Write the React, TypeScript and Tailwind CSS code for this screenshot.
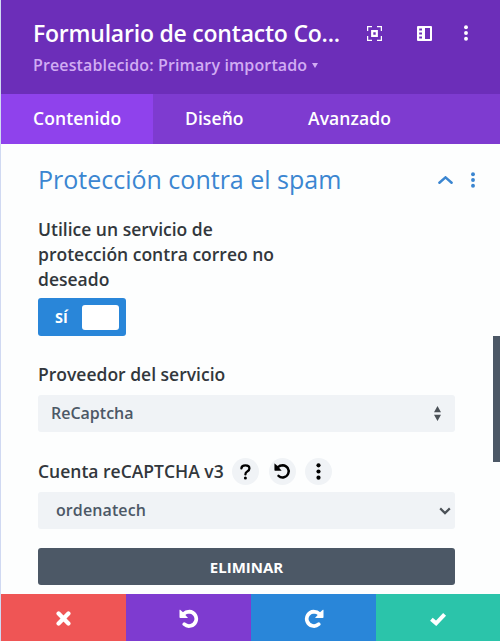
import React from "react";

function Dots({ className }: { className: string }) {
  return (
    <svg className={className} viewBox="0 0 4 16" fill="currentColor">
      <circle cx="2" cy="2.2" r="1.95" />
      <circle cx="2" cy="8" r="1.95" />
      <circle cx="2" cy="13.8" r="1.95" />
    </svg>
  );
}

function Undo({ className, weight }: { className: string; weight: number }) {
  return (
    <svg className={className} viewBox="0 0 20 20" fill="none">
      <path d="M.5 1Q.5.4 1.1.8L4 3.2 9 9H1.3Q.5 9 .5 8.2Z" fill="currentColor" />
      <path
        d="M4.5 5Q6.8 2.6 10.4 2.6A7.2 7.2 0 1 1 5.3 15.2"
        stroke="currentColor"
        strokeWidth={weight}
        strokeLinecap="round"
      />
    </svg>
  );
}

function RoundButton({ children }: { children: React.ReactNode }) {
  return (
    <button className="flex size-[27px] items-center justify-center rounded-full bg-[#f0f3f6] text-black">
      {children}
    </button>
  );
}

export default function App() {
  return (
    <div className="flex h-[641px] w-[500px] flex-col overflow-hidden border-l border-[#d0d9f2] bg-[#fdfefe] font-['Open_Sans','Noto_Sans',sans-serif] whitespace-nowrap text-[#32373c]">
      <header className="h-[94px] shrink-0 bg-[#6c2eb9] pt-4 pl-8 text-white">
        <div className="flex h-[34px] items-center">
          <h1 className="w-[334px] text-[23px] leading-[34px] font-semibold tracking-[-0.22px]">
            Formulario de contacto Co...
          </h1>
          <svg className="size-[15px]" viewBox="0 0 15 15" fill="none" stroke="currentColor">
            <path d="M.6 5V.6H5M10 .6h4.4V5M14.4 10v4.4H10M5 14.4H.6V10" strokeWidth="1.3" />
            <path d="M5.2 5.2h4.6v4.6H5.2z" strokeWidth="2.2" />
          </svg>
          <svg className="ml-[35px] size-[15px]" viewBox="0 0 15 15">
            <path
              d="M1 0h13q1 0 1 1v13q0 1-1 1H1q-1 0-1-1V1q0-1 1-1ZM8 2v11h5V2ZM2.2 2.6v2h2.8v-2ZM2.2 6.5v2h2.8v-2ZM2.2 10.4v2h2.8v-2Z"
              fill="currentColor"
              fillRule="evenodd"
            />
          </svg>
          <Dots className="ml-[32px] h-4 w-1" />
        </div>
        <div className="flex h-[30px] items-center text-[16px] font-semibold text-[#d1acf3]">
          <span className="tracking-[0.13px]">Preestablecido: Primary importado</span>
          <svg className="ml-[5px] h-[5px] w-[6px]" viewBox="0 0 6 5" fill="currentColor">
            <path d="M0 0h6L3 5Z" />
          </svg>
        </div>
      </header>

      <nav className="flex h-[50px] shrink-0 bg-[#7e3bd0] text-[17.5px] font-semibold text-white">
        <button className="w-[152px] bg-[#8f42ec] pb-0.5 pl-8 text-left tracking-[0.08px]">Contenido</button>
        <button className="w-[123px] pb-0.5 pl-8 text-left tracking-[0.08px]">Diseño</button>
        <button className="pb-0.5 pl-8 text-left tracking-[0.08px]">Avanzado</button>
      </nav>

      <div className="flex h-[450px] shrink-0">
        <main className="w-[454px] pt-[17px] pl-[37px]">
          <div className="flex h-[38px] w-[440px] items-center text-[#3b86d1]">
            <h2 className="w-[400px] text-[25px]">Protección contra el spam</h2>
            <svg className="h-[8px] w-[15px] shrink-0" viewBox="0 0 15 8" fill="none">
              <path d="M1.4 6.7 7.5 1.4l6.1 5.3" stroke="currentColor" strokeWidth="2.5" strokeLinecap="round" />
            </svg>
            <Dots className="ml-[18px] h-4 w-1 shrink-0" />
          </div>

          <p className="mt-[18px] text-[17.5px] leading-[25px] font-semibold">
            Utilice un servicio de
            <br />
            protección contra correo no
            <br />
            deseado
          </p>

          <button className="mt-[6px] flex h-[38px] w-[88px] items-center justify-between rounded-[3px] bg-[#2986d9] pr-[7px] pl-[17px]">
            <span className="pt-0.5 text-[14.5px] font-bold text-white">SÍ</span>
            <span className="h-[25px] w-[37px] rounded-[3px] bg-white" />
          </button>

          <p className="mt-[26px] text-[17.5px] leading-[25px] font-semibold">Proveedor del servicio</p>
          <div className="mt-2 flex h-[37px] w-[417px] items-center justify-between rounded-[3px] bg-[#f0f3f6] pr-[14px] pl-[13px] text-[#4c5866]">
            <span className="pb-0.5 text-[16px] font-semibold">ReCaptcha</span>
            <svg className="h-[15px] w-[7px]" viewBox="0 0 7 15" fill="#4b5157">
              <path d="M3.5 0 7 6.3H0ZM0 8.7h7L3.5 15Z" />
            </svg>
          </div>

          <div className="mt-[26px] flex h-[27px] items-center">
            <p className="w-[194px] text-[17.5px] font-semibold">Cuenta reCAPTCHA v3</p>
            <div className="flex gap-[9.5px]">
              <RoundButton>
                <svg className="h-[16px] w-[11px]" viewBox="0 0 11 16" fill="none">
                  <path
                    d="M1.4 4.4C1.5 2.5 3.1 1.4 5.4 1.4c2.4 0 4 1.2 4 3 0 1.5-.8 2.3-2.2 3.1C5.9 8.2 5.4 8.9 5.4 10.4"
                    stroke="currentColor"
                    strokeWidth="2.3"
                    strokeLinecap="round"
                  />
                  <circle cx="5.4" cy="14.1" r="1.5" fill="currentColor" />
                </svg>
              </RoundButton>
              <RoundButton>
                <Undo className="size-[17px]" weight={2.9} />
              </RoundButton>
              <RoundButton>
                <Dots className="h-[17px] w-[5px]" />
              </RoundButton>
            </div>
          </div>
          <div className="mt-[7px] flex h-[37px] w-[417px] items-center justify-between rounded-[3px] bg-[#f0f3f6] pr-1 pl-[18px] text-[#4c5866]">
            <span className="pb-0.5 text-[16px] font-semibold tracking-[0.1px]">ordenatech</span>
            <svg className="h-[8px] w-[12px]" viewBox="0 0 12 8" fill="none">
              <path d="m1.2 1.4 4.8 4.7 4.8-4.7" stroke="#4b5157" strokeWidth="2.2" />
            </svg>
          </div>

          <button className="mt-[19px] flex h-[37px] w-[417px] items-center justify-center rounded-[3px] bg-[#4c5866] pt-0.5 text-[15px] font-bold text-white">
            ELIMINAR
          </button>
        </main>
        <div className="ml-auto flex w-[7px] flex-col pt-[192px]">
          <div className="h-[126px] bg-[#4c5866]" />
        </div>
      </div>

      <footer className="grid h-[47px] shrink-0 grid-cols-[125px_125px_125px_1fr] text-white">
        <button className="flex items-center justify-center bg-[#ef5555] pt-0.5">
          <svg className="size-[15px]" viewBox="0 0 15 15" fill="none">
            <path d="m2.6 2.6 9.8 9.8m0-9.8-9.8 9.8" stroke="currentColor" strokeWidth="4.3" strokeLinecap="round" />
          </svg>
        </button>
        <button className="flex items-center justify-center bg-[#7e3bd0] pt-[3px]">
          <Undo className="size-[20px]" weight={3.7} />
        </button>
        <button className="flex items-center justify-center bg-[#2986d9] pt-[3px]">
          <Undo className="size-[20px] -scale-x-100" weight={3.7} />
        </button>
        <button className="flex items-center justify-center bg-[#2bc4aa] pt-0.5">
          <svg className="h-[14px] w-[18px]" viewBox="0 0 18 14" fill="none">
            <path d="m2.4 7.3 4.7 4L15.6 2.4" stroke="currentColor" strokeWidth="4" />
          </svg>
        </button>
      </footer>
    </div>
  );
}
